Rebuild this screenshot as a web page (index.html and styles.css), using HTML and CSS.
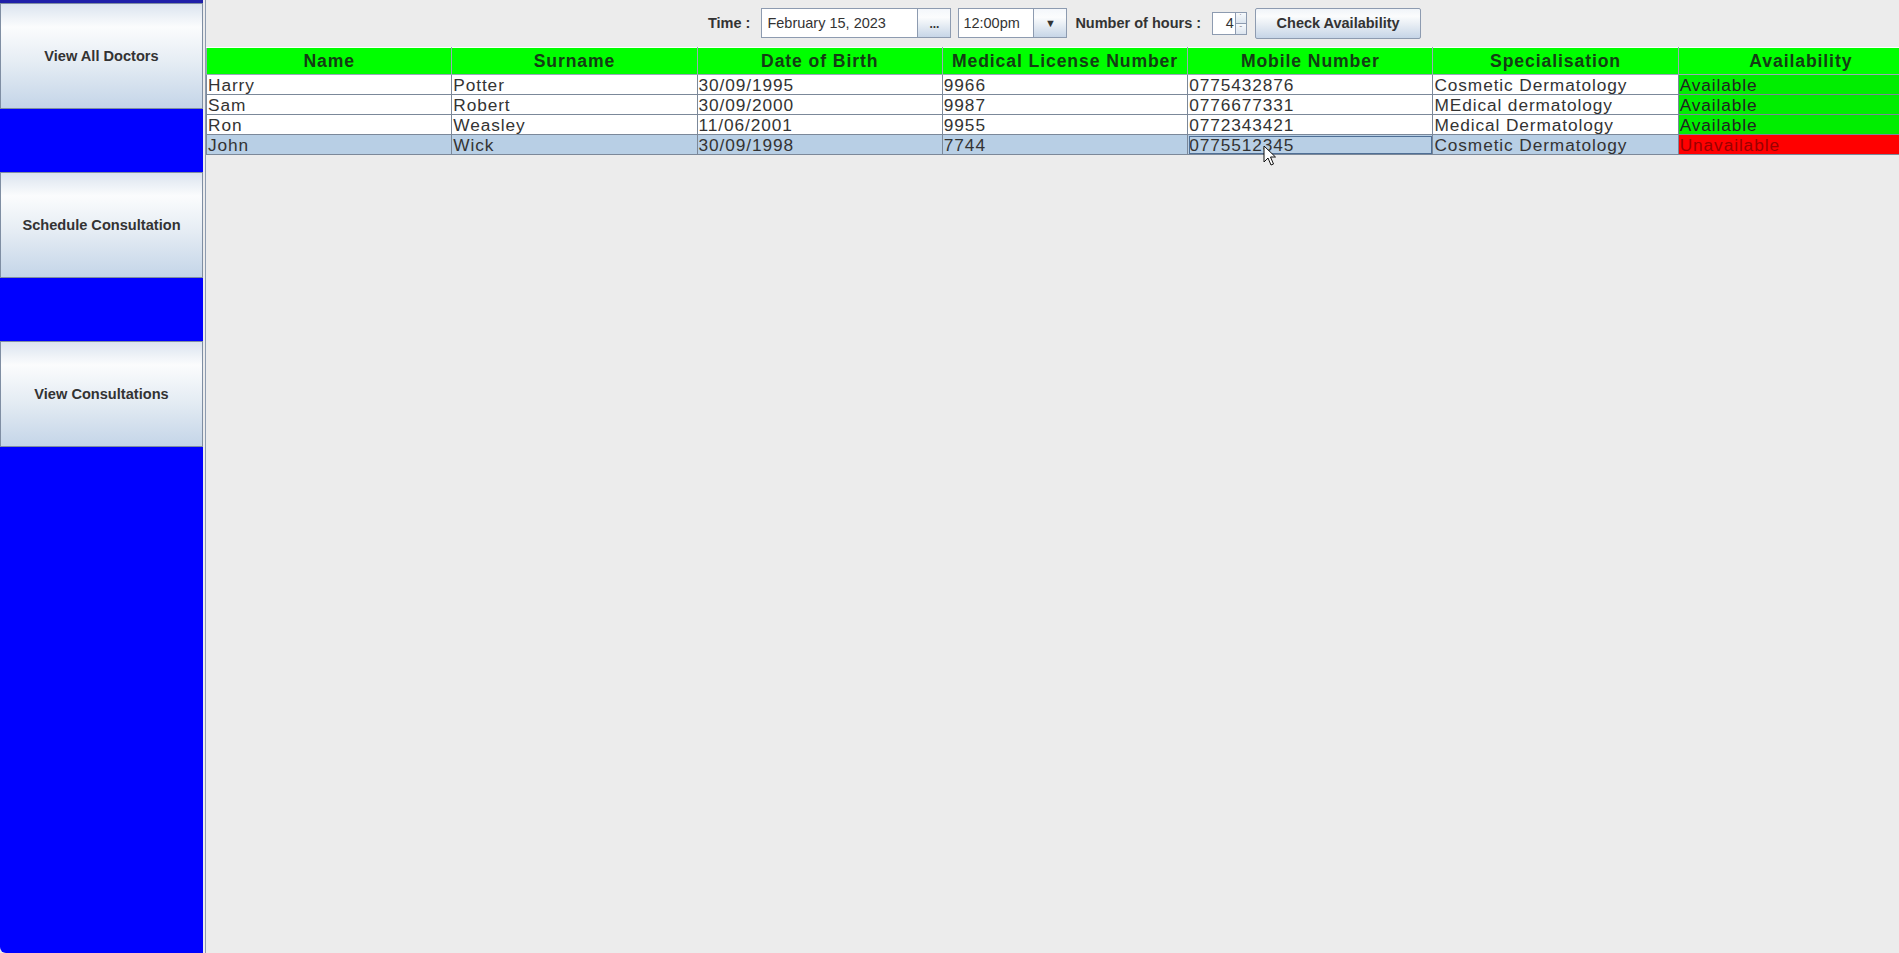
FILE: index.html
```html
<!DOCTYPE html>
<html>
<head>
<meta charset="utf-8">
<title>Doctors</title>
<link rel="stylesheet" href="styles.css">
</head>
<body>
<div class="app">
  <aside class="sidebar">
    <button class="nav-btn">View All Doctors</button>
    <button class="nav-btn">Schedule Consultation</button>
    <button class="nav-btn">View Consultations</button>
  </aside>
  <main class="main">
    <div class="toolbar">
      <span class="label">Time :</span>
      <div class="date-group">
        <div class="field date-field">February 15, 2023</div>
        <div class="small-btn dots">...</div>
      </div>
      <div class="combo">
        <div class="field combo-field">12:00pm</div>
        <div class="small-btn arrow">&#9660;</div>
      </div>
      <span class="label">Number of hours :</span>
      <div class="spinner">
        <div class="spin-field">4</div>
        <div class="spin-arrows">
          <div class="spin-up">&#729;</div>
          <div class="spin-down">&#713;</div>
        </div>
      </div>
      <button class="check-btn">Check Availability</button>
    </div>
    <div class="table-wrap">
      <table class="grid">
        <thead>
          <tr>
            <th>Name</th><th>Surname</th><th>Date of Birth</th><th>Medical License Number</th><th>Mobile Number</th><th>Specialisation</th><th>Availability</th>
          </tr>
        </thead>
        <tbody>
          <tr><td>Harry</td><td>Potter</td><td>30/09/1995</td><td>9966</td><td>0775432876</td><td>Cosmetic Dermatology</td><td class="avail">Available</td></tr>
          <tr><td>Sam</td><td>Robert</td><td>30/09/2000</td><td>9987</td><td>0776677331</td><td>MEdical dermatology</td><td class="avail">Available</td></tr>
          <tr><td>Ron</td><td>Weasley</td><td>11/06/2001</td><td>9955</td><td>0772343421</td><td>Medical Dermatology</td><td class="avail">Available</td></tr>
          <tr class="selected"><td>John</td><td>Wick</td><td>30/09/1998</td><td>7744</td><td class="focus">0775512345</td><td>Cosmetic Dermatology</td><td class="unavail">Unavailable</td></tr>
        </tbody>
      </table>
    </div>
    <svg class="cursor" width="14" height="22" viewBox="0 0 14 22"><path d="M1 1 L1 17 L5 13 L8 20 L10.5 19 L7.5 12 L12.5 12 Z" fill="#fff" stroke="#111" stroke-width="1"/></svg>
  </main>
</div>
</body>
</html>
```

FILE: styles.css
```css
* { box-sizing: border-box; }
html, body { margin: 0; padding: 0; height: 100%; }
body {
  font-family: "Liberation Sans", Arial, sans-serif;
  background: #ececec;
  overflow: hidden;
}
.app {
  display: flex;
  height: 953px;
}
.sidebar {
  width: 203px;
  flex: none;
  background: #0000ff;
  border-top: 3px solid #1f1fa8;
  border-bottom-left-radius: 6px;
  display: flex;
  flex-direction: column;
  gap: 63px;
}
.nav-btn {
  height: 106px;
  width: 203px;
  border: 1px solid #7f8ea3;
  background: linear-gradient(to bottom, #dbe4ef 0%, #fbfcfd 22%, #e6edf4 55%, #c4d5e8 100%);
  font-family: "Liberation Sans", Arial, sans-serif;
  font-weight: bold;
  font-size: 14.6px;
  color: #333;
  padding: 0;
  margin: 0;
}
.main {
  flex: 1;
  min-width: 0;
  position: relative;
  margin-left: 2px;
  border-left: 1px solid #8d9bb0;
  background: #ececec;
  overflow: hidden;
}
.toolbar {
  height: 47px;
  display: flex;
  align-items: center;
  justify-content: center;
  padding-left: 24px;
  padding-bottom: 1px;
}
.label {
  font-weight: bold;
  font-size: 14.5px;
  color: #333;
}
.label + .date-group { margin-left: 11px; }
.label + .spinner { margin-left: 11px; }
.date-group, .combo {
  display: flex;
  height: 30px;
}
.combo { margin-left: 7px; margin-right: 8px; }
.field {
  background: #fff;
  border: 1px solid #8d9bb0;
  font-size: 14.5px;
  color: #333;
  display: flex;
  align-items: center;
  padding-left: 5px;
}
.date-field { width: 157px; }
.combo-field { width: 76px; padding-left: 4px; }
.small-btn {
  width: 33px;
  border: 1px solid #8d9bb0;
  border-left: none;
  background: linear-gradient(to bottom, #f4f7fb 0%, #fbfcfd 30%, #dde6f0 70%, #c7d6e7 100%);
  display: flex;
  align-items: center;
  justify-content: center;
  color: #333;
  font-size: 12px;
  font-weight: bold;
}
.dots { padding-top: 2px; }
.arrow { font-size: 11px; }
.spinner {
  display: flex;
  height: 23px;
  width: 35px;
  border: 1px solid #8d9bb0;
}
.spin-field {
  width: 23px;
  background: #fff;
  font-size: 14.5px;
  color: #333;
  display: flex;
  align-items: center;
  justify-content: flex-end;
  padding-right: 1px;
}
.spin-arrows {
  width: 12px;
  display: flex;
  flex-direction: column;
  border-left: 1px solid #8d9bb0;
}
.spin-up, .spin-down {
  flex: 1;
  background: linear-gradient(to bottom, #f8fafc, #dce5ef);
  font-size: 8px;
  line-height: 10px;
  text-align: center;
  color: #444;
}
.spin-up { border-bottom: 1px solid #8d9bb0; }
.check-btn {
  margin-left: 8px;
  width: 166px;
  height: 31px;
  border: 1px solid #8d9bb0;
  border-radius: 2px;
  background: linear-gradient(to bottom, #f0f4f9 0%, #fbfcfd 25%, #e3eaf2 60%, #c6d5e7 100%);
  font-family: "Liberation Sans", Arial, sans-serif;
  font-weight: bold;
  font-size: 14.5px;
  color: #333;
  padding: 0;
}
.table-wrap {
  width: 1718px;
}
.grid {
  width: 1718px;
  table-layout: fixed;
  border-collapse: collapse;
  border-top: 1px solid #8d9bb0;
}
.grid th {
  background: #00ff00;
  height: 27px;
  font-size: 17.6px;
  font-weight: bold;
  letter-spacing: 0.9px;
  color: #143c14;
  border: 1px solid #9aa8b8;
  border-top: 1px solid #ffffff;
  padding: 0;
  text-align: center;
}
.grid td {
  height: 20px;
  padding: 0 0 0 1px;
  font-size: 17.3px;
  letter-spacing: 0.9px;
  color: #333;
  background: #fff;
  border: 1px solid #7b8899;
  white-space: nowrap;
  overflow: hidden;
  line-height: 18px;
}
.grid td.avail { background: #00ee00; color: #222; }
.grid tr.selected td { background: #b8cfe5; }
.grid tr.selected td.focus { outline: 1px solid #4f6f95; outline-offset: -2px; }
.grid tr.selected td.unavail { background: #ff0000; color: #9a0000; }
.cursor {
  position: absolute;
  left: 1057px;
  top: 145px;
}
```
